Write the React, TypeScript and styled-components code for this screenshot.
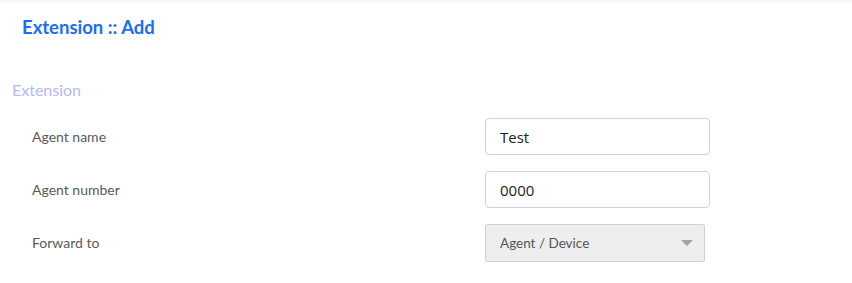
import React from 'react';
import styled, { createGlobalStyle } from 'styled-components';

const GlobalStyle = createGlobalStyle`
  html, body {
    margin: 0;
    padding: 0;
    background: #ffffff;
    font-family: Lato, "Noto Sans", sans-serif;
  }
`;

const Page = styled.div`
  width: 852px;
  height: 283px;
  box-sizing: border-box;
  background: #ffffff;
  box-shadow: inset 0 3px 3px -2px rgba(0, 0, 0, 0.06);
  overflow: hidden;
`;

const Header = styled.div`
  padding: 16px 22px 0;
  height: 37px;
`;

const Title = styled.h1`
  margin: 0;
  font-size: 18.5px;
  line-height: 22px;
  font-weight: 700;
  color: #1a6ef5;
`;

const Section = styled.div`
  padding: 27px 0 0 12px;
`;

const SectionTitle = styled.div`
  font-size: 16px;
  line-height: 20px;
  color: #b3b9f3;
`;

const Form = styled.div`
  display: flex;
  flex-direction: column;
  gap: 16px;
  padding: 18px 0 0 32px;
`;

const Row = styled.div`
  display: flex;
  align-items: center;
  height: 37px;
`;

const Label = styled.label`
  width: 453px;
  font-size: 14px;
  color: #5a5a5a;
`;

const TextInput = styled.div`
  box-sizing: border-box;
  width: 225px;
  height: 37px;
  border: 1px solid #cfd3d8;
  border-radius: 4px;
  padding: 0 14px;
  display: flex;
  align-items: center;
  font-family: "Open Sans", "Noto Sans", sans-serif;
  font-size: 15px;
  color: #222222;
`;

const Select = styled.div`
  box-sizing: border-box;
  width: 220px;
  height: 38px;
  border: 1px solid #d2d2d2;
  border-radius: 2px;
  background: #eeeeee;
  padding: 0 11px 0 14px;
  display: flex;
  align-items: center;
  justify-content: space-between;
  font-size: 13.5px;
  color: #555555;
`;

const Caret = styled.span`
  width: 0;
  height: 0;
  border-left: 6px solid transparent;
  border-right: 6px solid transparent;
  border-top: 6px solid #a0a4a8;
`;

export default function App() {
  return (
    <>
      <GlobalStyle />
      <Page>
        <Header>
          <Title>Extension :: Add</Title>
        </Header>
        <Section>
          <SectionTitle>Extension</SectionTitle>
        </Section>
        <Form>
          <Row>
            <Label>Agent name</Label>
            <TextInput>Test</TextInput>
          </Row>
          <Row>
            <Label>Agent number</Label>
            <TextInput>0000</TextInput>
          </Row>
          <Row>
            <Label>Forward to</Label>
            <Select>
              Agent / Device
              <Caret />
            </Select>
          </Row>
        </Form>
      </Page>
    </>
  );
}
